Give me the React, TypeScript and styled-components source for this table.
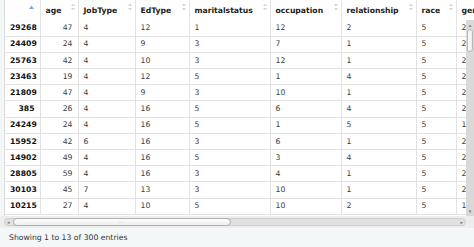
import React from 'react';
import styled, { createGlobalStyle } from 'styled-components';

const GlobalStyle = createGlobalStyle`
  html, body {
    margin: 0;
    padding: 0;
    background: #f4f7f7;
    font-family: 'DejaVu Sans', Verdana, sans-serif;
  }
`;

const columns = [
  { key: 'rowname', label: '', width: 35 },
  { key: 'age', label: 'age', width: 38, numeric: true },
  { key: 'JobType', label: 'JobType', width: 57 },
  { key: 'EdType', label: 'EdType', width: 54 },
  { key: 'maritalstatus', label: 'maritalstatus', width: 81 },
  { key: 'occupation', label: 'occupation', width: 71 },
  { key: 'relationship', label: 'relationship', width: 75 },
  { key: 'race', label: 'race', width: 40 },
  { key: 'gender', label: 'gender', width: 56 },
];

const rows = [
  ['29268', 47, 4, 12, 1, 12, 2, 5, 2],
  ['24409', 24, 4, 9, 3, 7, 1, 5, 2],
  ['25763', 42, 4, 10, 3, 12, 1, 5, 2],
  ['23463', 19, 4, 12, 5, 1, 4, 5, 2],
  ['21809', 47, 4, 9, 3, 10, 1, 5, 2],
  ['385', 26, 4, 16, 5, 6, 4, 5, 2],
  ['24249', 24, 4, 16, 5, 1, 5, 5, 1],
  ['15952', 42, 6, 16, 3, 6, 1, 5, 2],
  ['14902', 49, 4, 16, 5, 3, 4, 5, 2],
  ['28805', 59, 4, 16, 3, 4, 1, 5, 2],
  ['30103', 45, 7, 13, 3, 10, 1, 5, 2],
  ['10215', 27, 4, 10, 5, 10, 2, 5, 1],
];

const tableWidth = columns.reduce((s, c) => s + c.width, 0);

const Page = styled.div`
  width: 474px;
  height: 247px;
  display: flex;
  flex-direction: column;
  overflow: hidden;
`;

const HeadBox = styled.div`
  height: 20px;
  margin-left: 4px;
  border-left: 1px solid #dcdcdc;
  background: #fff;
  overflow: hidden;
`;

const BodyRow = styled.div`
  display: flex;
  height: 196px;
`;

const BodyBox = styled.div`
  flex: 1;
  margin-left: 4px;
  border-left: 1px solid #dcdcdc;
  background: #fff;
  overflow: hidden;
`;

const Table = styled.table`
  table-layout: fixed;
  border-collapse: collapse;
  width: ${tableWidth}px;
  font-size: 7.7px;
  color: #333;
`;

const HeadCell = styled.th`
  position: relative;
  height: 20px;
  padding: 0 5px;
  text-align: left;
  font-weight: bold;
  color: #222;
  border-right: 1px solid #e4e4e4;
  border-bottom: 1px solid #cfcfcf;
  white-space: nowrap;
  overflow: hidden;
`;

const SortIcon = styled.svg`
  position: absolute;
  right: 3px;
  top: 3px;
`;

const Row = styled.tr`
  height: 16.2px;
`;

const Cell = styled.td<{ $align?: 'left' | 'right'; $bold?: boolean }>`
  padding: 0 5px;
  line-height: 1;
  text-align: ${(p) => p.$align || 'left'};
  font-weight: ${(p) => (p.$bold ? 'bold' : 'normal')};
  color: ${(p) => (p.$bold ? '#111' : '#3a3a3a')};
  border-right: 1px solid #e2e2e2;
  border-bottom: 1px solid #e2e2e2;
  white-space: nowrap;
  overflow: hidden;
`;

const VScroll = styled.div`
  width: 8px;
  background: #d9d9d9;
  display: flex;
  flex-direction: column;
  align-items: center;
  padding: 2px 0;
  box-sizing: border-box;
`;

const Arrow = styled.div`
  font-size: 5px;
  line-height: 6px;
  color: #777;
`;

const VThumb = styled.div`
  width: 6px;
  height: 23px;
  margin-top: 1px;
  border: 1px solid #b8b8b8;
  border-radius: 3px;
  background: linear-gradient(to right, #fbfbfb, #ececec);
  box-sizing: border-box;
`;

const Spacer = styled.div`
  flex: 1;
`;

const HScrollRow = styled.div`
  display: flex;
  height: 12px;
  padding-left: 4px;
  background: #ededed;
`;

const HTrack = styled.div`
  flex: 1;
  display: flex;
  align-items: center;
  margin: 2px 0;
  border: 1px solid #cdcdcd;
  border-radius: 5px;
  background: #e1e1e1;
  padding: 0 2px;
`;

const HThumb = styled.div`
  width: 218px;
  height: 8px;
  margin-left: 3px;
  border: 1px solid #b0b0b0;
  border-radius: 5px;
  background: linear-gradient(#fdfdfd, #ededed);
  box-sizing: border-box;
  display: flex;
  align-items: center;
  justify-content: center;
  font-size: 5px;
  line-height: 1;
  color: #999;
  letter-spacing: 0.5px;
`;

const Corner = styled.div`
  width: 8px;
`;

const Footer = styled.div`
  flex: 1;
  padding-left: 9px;
  display: flex;
  align-items: center;
  font-size: 7.7px;
  color: #333;
`;

const SortArrows: React.FC<{ active?: boolean }> = ({ active }) =>
  active ? (
    <SortIcon width="5" height="6" viewBox="0 0 5 6" style={{ right: 6, top: 5 }}>
      <path d="M0 4 L2.5 0.5 L5 4 Z" fill="#7ea7d8" />
    </SortIcon>
  ) : (
    <SortIcon width="4" height="8" viewBox="0 0 4 8">
      <path d="M0 3 L2 0.5 L4 3 Z" fill="#d4d4d4" />
      <path d="M0 5 L2 7.5 L4 5 Z" fill="#d4d4d4" />
    </SortIcon>
  );

const ColGroup: React.FC = () => (
  <colgroup>
    {columns.map((c) => (
      <col key={c.key} style={{ width: c.width }} />
    ))}
  </colgroup>
);

export default function App() {
  return (
    <Page>
      <GlobalStyle />
      <HeadBox>
        <Table>
          <ColGroup />
          <thead>
            <tr>
              {columns.map((c, i) => (
                <HeadCell key={c.key}>
                  {c.label}
                  <SortArrows active={i === 0} />
                </HeadCell>
              ))}
            </tr>
          </thead>
        </Table>
      </HeadBox>
      <BodyRow>
        <BodyBox>
          <Table>
            <ColGroup />
            <tbody>
              {rows.map((r) => (
                <Row key={r[0]}>
                  {r.map((v, i) => (
                    <Cell
                      key={columns[i].key}
                      $align={i === 0 || columns[i].numeric ? 'right' : 'left'}
                      $bold={i === 0}
                    >
                      {v}
                    </Cell>
                  ))}
                </Row>
              ))}
            </tbody>
          </Table>
        </BodyBox>
        <VScroll>
          <Arrow>▴</Arrow>
          <VThumb />
          <Spacer />
          <Arrow>▾</Arrow>
        </VScroll>
      </BodyRow>
      <HScrollRow>
        <HTrack>
          <Arrow>◂</Arrow>
          <HThumb>···</HThumb>
          <Spacer />
          <Arrow>▸</Arrow>
        </HTrack>
        <Corner />
      </HScrollRow>
      <Footer>Showing 1 to 13 of 300 entries</Footer>
    </Page>
  );
}
